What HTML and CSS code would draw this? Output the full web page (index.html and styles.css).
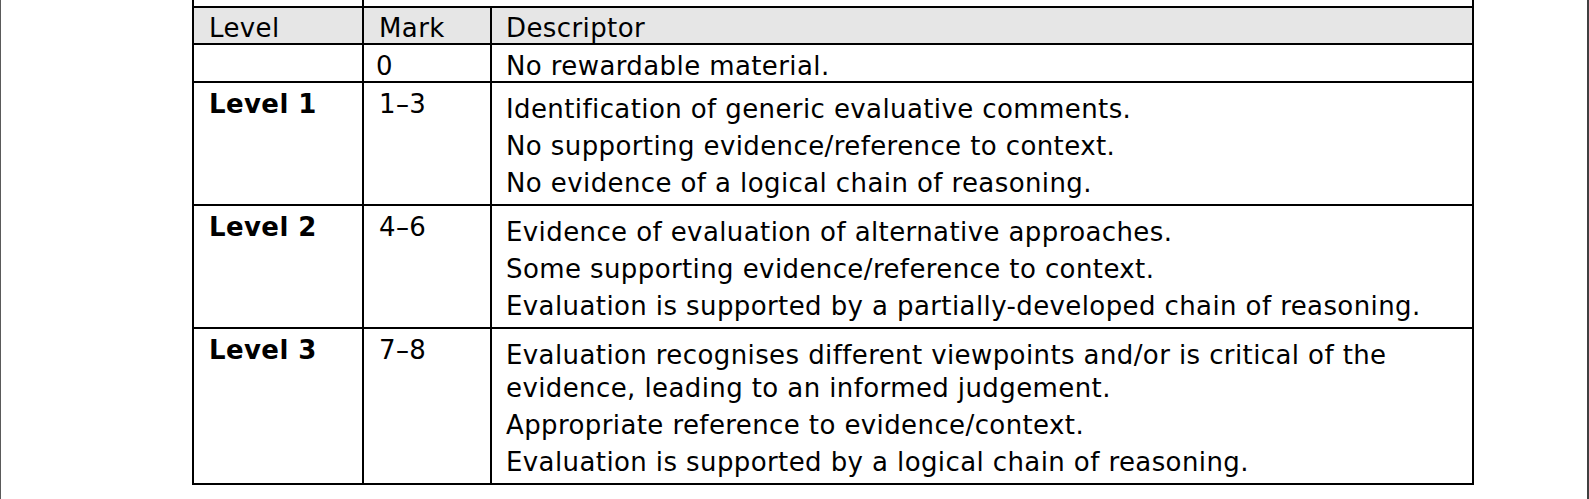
FILE: index.html
```html
<!DOCTYPE html>
<html lang="en">
<head>
<meta charset="utf-8">
<title>Levels of response</title>
<link rel="stylesheet" href="styles.css">
</head>
<body>
<div class="page">
  <div class="grid">
    <div class="cell frag"></div>
    <div class="cell frag span2"></div>

    <div class="cell head">Level</div>
    <div class="cell head">Mark</div>
    <div class="cell head desc-col">Descriptor</div>

    <div class="cell zero"></div>
    <div class="cell zero mark0">0</div>
    <div class="cell zero desc-col">No rewardable material.</div>

    <div class="cell level">Level 1</div>
    <div class="cell mark">1–3</div>
    <div class="cell desc desc-col">
      <p>Identification of generic evaluative comments.</p>
      <p>No supporting evidence/reference to context.</p>
      <p>No evidence of a logical chain of reasoning.</p>
    </div>

    <div class="cell level">Level 2</div>
    <div class="cell mark">4–6</div>
    <div class="cell desc desc-col">
      <p>Evidence of evaluation of alternative approaches.</p>
      <p>Some supporting evidence/reference to context.</p>
      <p>Evaluation is supported by a partially-developed chain of reasoning.</p>
    </div>

    <div class="cell level">Level 3</div>
    <div class="cell mark">7–8</div>
    <div class="cell desc desc-col">
      <p>Evaluation recognises different viewpoints and/or is critical of the evidence, leading to an informed judgement.</p>
      <p>Appropriate reference to evidence/context.</p>
      <p>Evaluation is supported by a logical chain of reasoning.</p>
    </div>
  </div>
</div>
</body>
</html>
```

FILE: styles.css
```css
html, body {
  margin: 0;
  padding: 0;
  background: #ffffff;
}

.page {
  box-sizing: border-box;
  width: 1589px;
  height: 499px;
  border-left: 1px solid #5a5a5a;
  border-right: 2px solid #404040;
  background: #ffffff;
  overflow: hidden;
  font-family: "DejaVu Sans", Verdana, sans-serif;
  font-size: 26px;
  letter-spacing: 0.4px;
  color: #000000;
}

.grid {
  display: grid;
  grid-template-columns: 170px 128px 982px;
  width: 1282px;
  margin-left: 191px;
  border-left: 2px solid #000000;
  box-sizing: border-box;
}

.cell {
  box-sizing: border-box;
  border-right: 2px solid #000000;
  border-bottom: 2px solid #000000;
  line-height: 33px;
  padding-left: 15px;
  padding-right: 8px;
}

.frag {
  height: 8px;
  padding: 0;
}

.span2 {
  grid-column: span 2;
}

.head {
  background: #e6e6e6;
  height: 37px;
  padding-top: 6px;
  line-height: 29px;
}

.zero {
  height: 38px;
  padding-top: 7px;
  line-height: 29px;
}

.mark0 {
  padding-left: 12px;
}

.desc-col {
  padding-left: 14px;
}

.level {
  font-weight: bold;
  padding-top: 5px;
}

.mark {
  padding-top: 5px;
}

.desc {
  padding-top: 10px;
  padding-bottom: 4px;
  display: flex;
  flex-direction: column;
  gap: 4px;
}

.desc p {
  margin: 0;
}
```
